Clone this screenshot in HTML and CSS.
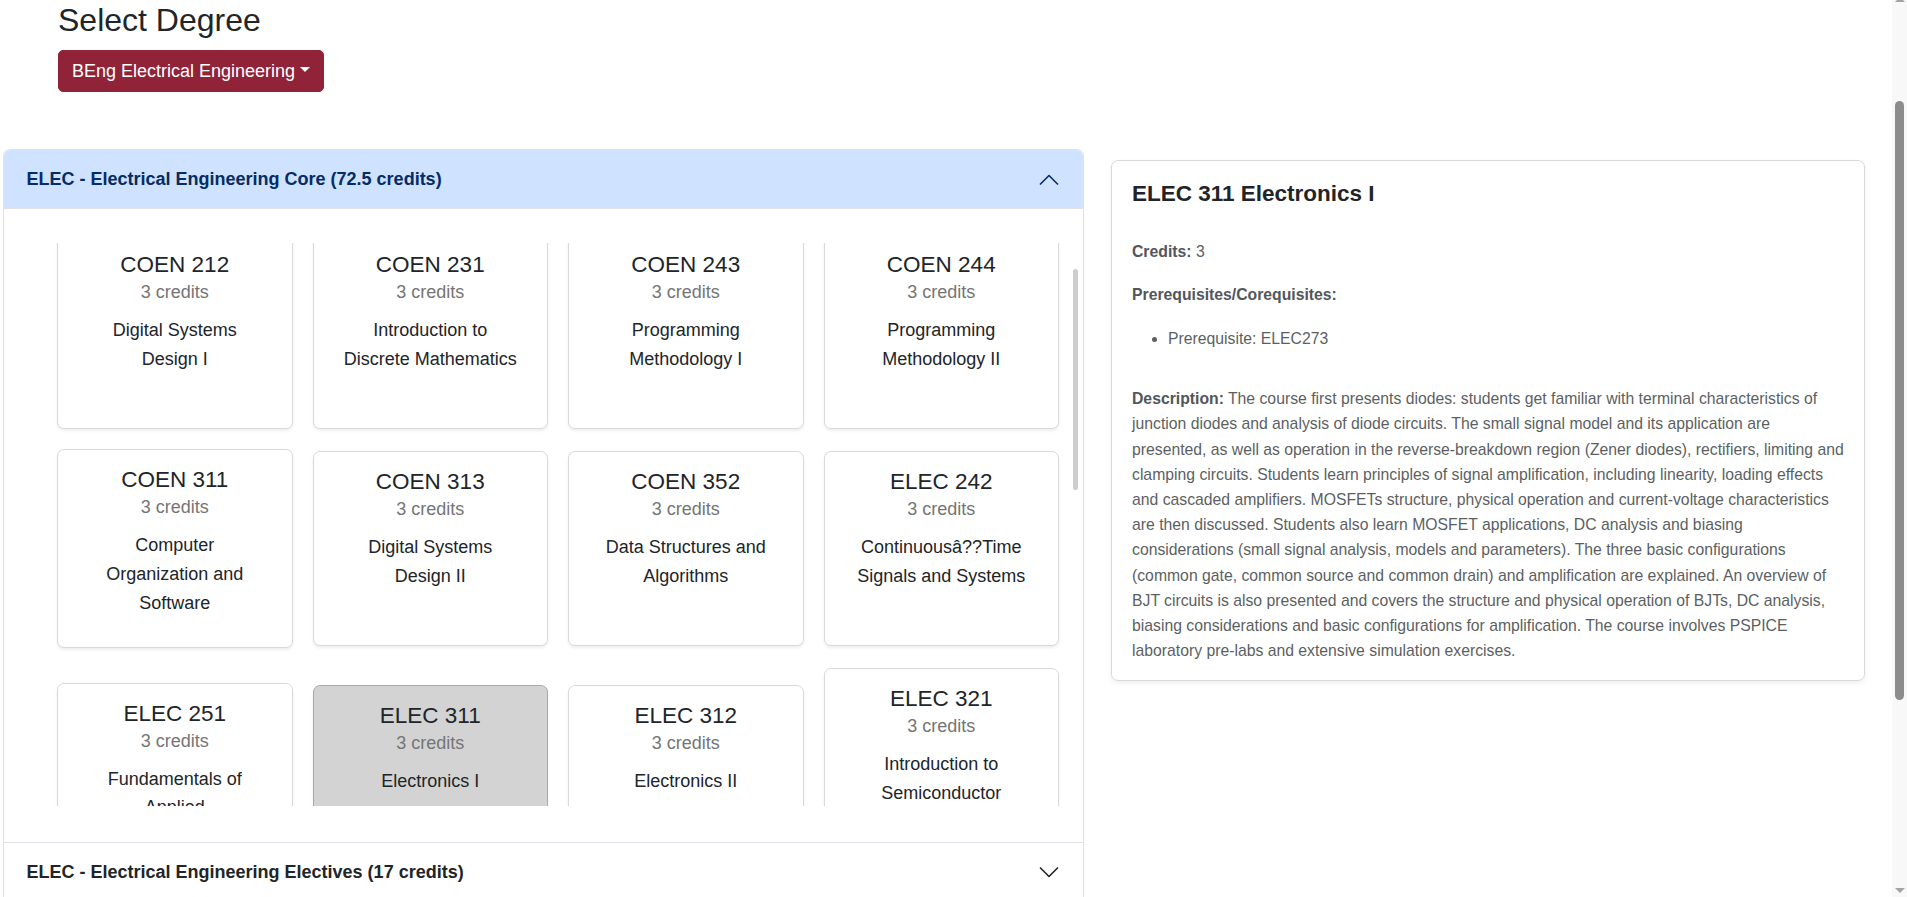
FILE: index.html
```html
<!DOCTYPE html>
<html lang="en">
<head>
<meta charset="utf-8">
<title>Select Degree</title>
<link rel="stylesheet" href="styles.css">
</head>
<body>
<div class="app">
  <div class="page">
    <section class="degree">
      <h2 class="degree-title">Select Degree</h2>
      <button class="btn-degree" type="button">BEng Electrical Engineering<span class="caret"></span></button>
    </section>

    <div class="main">
      <div class="accordion">
        <div class="acc-item">
          <div class="acc-header open">
            <span>ELEC - Electrical Engineering Core (72.5 credits)</span>
            <svg class="chev" width="22" height="22" viewBox="0 0 22 22"><polyline points="2,15.5 11,6.5 20,15.5" fill="none" stroke="currentColor" stroke-width="1.6" stroke-linejoin="round"/></svg>
          </div>
          <div class="acc-body">
            <div class="scroll-wrap">
              <div class="scroll">
                <div class="course-grid">
                  <div class="course"><h5>COEN 212</h5><p class="cr">3 credits</p><p class="name">Digital Systems Design I</p></div>
                  <div class="course"><h5>COEN 231</h5><p class="cr">3 credits</p><p class="name">Introduction to Discrete Mathematics</p></div>
                  <div class="course"><h5>COEN 243</h5><p class="cr">3 credits</p><p class="name">Programming Methodology I</p></div>
                  <div class="course"><h5>COEN 244</h5><p class="cr">3 credits</p><p class="name">Programming Methodology II</p></div>

                  <div class="course"><h5>COEN 311</h5><p class="cr">3 credits</p><p class="name">Computer Organization and Software</p></div>
                  <div class="course"><h5>COEN 313</h5><p class="cr">3 credits</p><p class="name">Digital Systems Design II</p></div>
                  <div class="course"><h5>COEN 352</h5><p class="cr">3 credits</p><p class="name">Data Structures and Algorithms</p></div>
                  <div class="course"><h5>ELEC 242</h5><p class="cr">3 credits</p><p class="name">Continuousâ??Time Signals and Systems</p></div>

                  <div class="course"><h5>ELEC 251</h5><p class="cr">3 credits</p><p class="name">Fundamentals of Applied Electromagnetics</p></div>
                  <div class="course selected"><h5>ELEC 311</h5><p class="cr">3 credits</p><p class="name">Electronics I</p></div>
                  <div class="course"><h5>ELEC 312</h5><p class="cr">3 credits</p><p class="name">Electronics II</p></div>
                  <div class="course"><h5>ELEC 321</h5><p class="cr">3 credits</p><p class="name">Introduction to Semiconductor Materials and Devices</p></div>

                  <div class="course"><h5>ELEC 331</h5><p class="cr">3 credits</p><p class="name">Fundamentals of Electrical Power Engineering</p></div>
                  <div class="course"><h5>ELEC 342</h5><p class="cr">3 credits</p><p class="name">Discrete-Time Signals and Systems</p></div>
                  <div class="course"><h5>ELEC 351</h5><p class="cr">3.75 credits</p><p class="name">Electromagnetic Waves and Guiding Structures</p></div>
                  <div class="course"><h5>ELEC 364</h5><p class="cr">3.5 credits</p><p class="name">Analog and Digital Communications</p></div>

                  <div class="course"><h5>ELEC 365</h5><p class="cr">3 credits</p><p class="name">Complex Variables and Partial Differential Equations</p></div>
                  <div class="course"><h5>ELEC 372</h5><p class="cr">3.5 credits</p><p class="name">Fundamentals of Control Systems</p></div>
                  <div class="course"><h5>ELEC 390</h5><p class="cr">3 credits</p><p class="name">Electrical Engineering Product Design Project</p></div>
                  <div class="course"><h5>ELEC 490</h5><p class="cr">4 credits</p><p class="name">Capstone Electrical Engineering Design Project</p></div>
                </div>
              </div>
              <div class="scroll-thumb"></div>
            </div>
          </div>
        </div>
        <div class="acc-item">
          <div class="acc-header">
            <span>ELEC - Electrical Engineering Electives (17 credits)</span>
            <svg class="chev" width="22" height="22" viewBox="0 0 22 22"><polyline points="2,6.5 11,15.5 20,6.5" fill="none" stroke="currentColor" stroke-width="1.6" stroke-linejoin="round"/></svg>
          </div>
        </div>
      </div>

      <aside class="detail">
        <h5 class="detail-title">ELEC 311 Electronics I</h5>
        <p><strong>Credits:</strong> 3</p>
        <p><strong>Prerequisites/Corequisites:</strong></p>
        <ul class="prereq">
          <li>Prerequisite: ELEC273</li>
        </ul>
        <p class="desc"><strong>Description:</strong> The course first presents diodes: students get familiar with terminal characteristics of junction diodes and analysis of diode circuits. The small signal model and its application are presented, as well as operation in the reverse-breakdown region (Zener diodes), rectifiers, limiting and clamping circuits. Students learn principles of signal amplification, including linearity, loading effects and cascaded amplifiers. MOSFETs structure, physical operation and current-voltage characteristics are then discussed. Students also learn MOSFET applications, DC analysis and biasing considerations (small signal analysis, models and parameters). The three basic configurations (common gate, common source and common drain) and amplification are explained. An overview of BJT circuits is also presented and covers the structure and physical operation of BJTs, DC analysis, biasing considerations and basic configurations for amplification. The course involves PSPICE laboratory pre-labs and extensive simulation exercises.</p>
      </aside>
    </div>
  </div>

  <div class="vbar">
    <span class="arrow-up"></span>
    <span class="vthumb"></span>
    <span class="arrow-down"></span>
  </div>
</div>
</body>
</html>
```

FILE: styles.css
```css
html, body {
  margin: 0;
  height: 100%;
  overflow: hidden;
}

body {
  font-family: "Liberation Sans", Arial, sans-serif;
  font-size: 18px;
  color: #212529;
  background: #fff;
}

.app {
  display: flex;
  height: 100vh;
}

.page {
  flex: 1;
  min-width: 0;
  overflow: hidden;
}

/* ---------- degree selector ---------- */
.degree {
  padding: 1px 0 0 58px;
}

.degree-title {
  font-size: 32px;
  font-weight: 400;
  line-height: 38.4px;
  margin: 0 0 10.8px;
}

.btn-degree {
  display: inline-flex;
  align-items: center;
  background: #912338;
  color: #fff;
  border: 1px solid #912338;
  border-radius: 5px;
  padding: 7px 13px;
  font-family: "Liberation Sans", Arial, sans-serif;
  font-size: 18px;
  line-height: 26px;
  cursor: pointer;
}

.caret {
  width: 0;
  height: 0;
  margin-left: 5px;
  margin-bottom: 4px;
  border-top: 5.4px solid #fff;
  border-left: 5.4px solid transparent;
  border-right: 5.4px solid transparent;
}

/* ---------- main row ---------- */
.main {
  display: flex;
  align-items: flex-start;
  gap: 27px;
  padding: 57px 0 0 3px;
}

.accordion {
  flex: 0 0 1081px;
  width: 1081px;
  box-sizing: border-box;
  border: 1px solid #dee2e6;
  border-radius: 7px;
  overflow: hidden;
}

.acc-item + .acc-item {
  border-top: 1px solid #dee2e6;
}

.acc-header {
  display: flex;
  align-items: center;
  justify-content: space-between;
  padding: 16px 23px 16px 22.5px;
  font-weight: 700;
  line-height: 27px;
  color: #212529;
  background: #fff;
}

.acc-header.open {
  background: #cfe2ff;
  color: #052c65;
  box-shadow: inset 0 -1px 0 #dee2e6;
}

.chev {
  display: block;
  flex: 0 0 22px;
}

.acc-body {
  padding: 34px 0 36px;
}

.scroll-wrap {
  position: relative;
  height: 562.5px;
}

.scroll {
  height: 100%;
  overflow: hidden;
  padding: 0 24px 0 53px;
}

.scroll-thumb {
  position: absolute;
  right: 5px;
  top: 26px;
  width: 5px;
  height: 221px;
  border-radius: 3px;
  background: #cdcdcd;
}

.course-grid {
  display: grid;
  grid-template-columns: repeat(4, 1fr);
  gap: 20px;
  align-items: center;
  margin-top: -9px;
}

.course {
  box-sizing: border-box;
  min-height: 195px;
  padding: 16px 30px;
  border: 1px solid #d9d9d9;
  border-radius: 7px;
  box-shadow: 0 2px 3px rgba(0, 0, 0, 0.07);
  background: #fff;
  text-align: center;
}

.course h5 {
  margin: 0;
  font-size: 22.5px;
  font-weight: 400;
  line-height: 27px;
  color: #212529;
}

.course .cr {
  margin: 0 0 9px;
  line-height: 28.8px;
  color: #757575;
}

.course .name {
  margin: 0 0 14px;
  line-height: 28.8px;
}

.course.selected {
  background: #d3d3d3;
  border-color: #a9a9a9;
}

/* ---------- detail panel ---------- */
.detail {
  flex: 0 0 754px;
  width: 754px;
  box-sizing: border-box;
  margin-top: 11px;
  padding: 19px 19px 17px 20px;
  border: 1px solid #dadada;
  border-radius: 7px;
  box-shadow: 0 2px 4px rgba(0, 0, 0, 0.07);
  font-size: 15.75px;
  line-height: 25.2px;
  color: #5c5f62;
}

.detail-title {
  margin: 0 0 32px;
  font-size: 22.5px;
  line-height: 27px;
  font-weight: 700;
  color: #212529;
}

.detail p {
  margin: 0 0 18px;
}

.detail strong {
  color: #53565a;
}

.prereq {
  margin: 2px 0 35.3px;
  padding-left: 36px;
}

.detail .desc {
  margin: 0;
}

/* ---------- page scrollbar ---------- */
.vbar {
  flex: 0 0 15px;
  background: #f8f8f8;
  display: flex;
  flex-direction: column;
  align-items: center;
}

.arrow-up {
  width: 0;
  height: 0;
  margin-top: -3px;
  border-left: 5px solid transparent;
  border-right: 5px solid transparent;
  border-bottom: 5px solid #a3a3a3;
}

.vthumb {
  width: 9px;
  height: 599px;
  margin-top: 99px;
  border-radius: 5px;
  background: #8c8c8c;
}

.arrow-down {
  width: 0;
  height: 0;
  margin-top: auto;
  margin-bottom: 4px;
  border-left: 5px solid transparent;
  border-right: 5px solid transparent;
  border-top: 5px solid #a3a3a3;
}
```
